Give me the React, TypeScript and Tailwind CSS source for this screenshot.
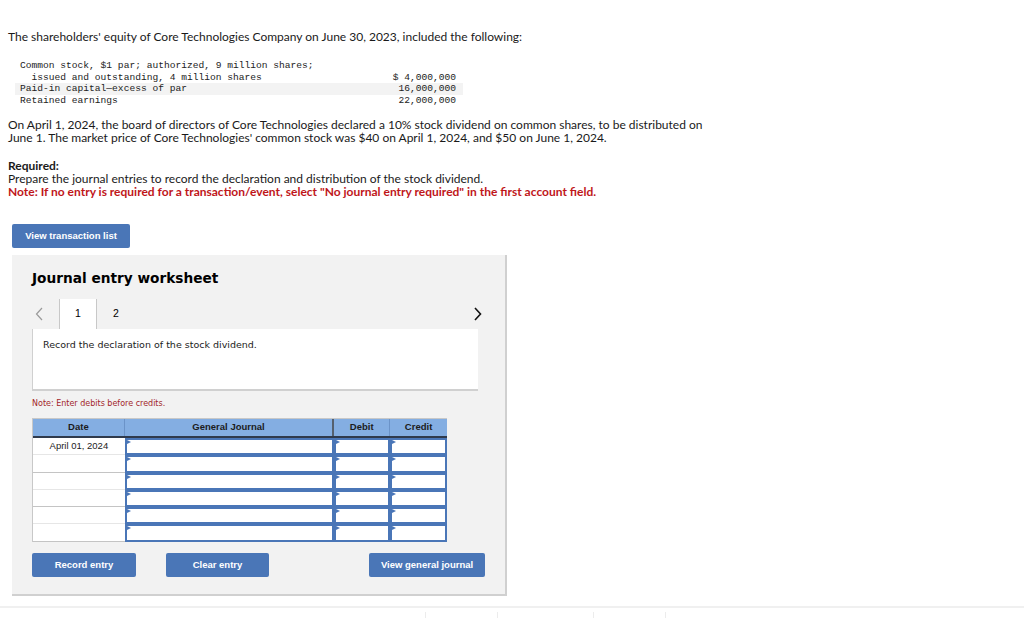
const rows = [0, 1, 2, 3, 4, 5];

const Cell = ({ w }: { w: string }) => (
  <div className={`relative h-[17.3px] ${w} border-2 border-[#4a76b7] bg-white`}>
    <span className="absolute left-0 top-0 h-0 w-0 border-y-[2.5px] border-l-[4px] border-y-transparent border-l-[#4a76b7]" />
  </div>
);

const Btn = ({ label, w }: { label: string; w: string }) => (
  <button
    className={`flex h-[24px] ${w} items-center justify-center rounded-[2px] bg-[#4a76b7] text-[9.5px] font-bold text-white`}
    style={{ fontFamily: '"Liberation Sans", Arial, sans-serif' }}
  >
    {label}
  </button>
);

const App = () => {
  return (
    <div className="relative h-[619px] w-[1024px] overflow-hidden bg-white text-[#1a1a1a]">
      <div className="px-2 pt-[29px]" style={{ fontFamily: "Lato, sans-serif" }}>
        <p className="text-[12px] leading-[15px]">
          The shareholders' equity of Core Technologies Company on June 30, 2023, included the following:
        </p>

        <div
          className="ml-[7px] mt-[16px] w-[448px] text-[9.6px] leading-[11.5px] text-[#222]"
          style={{ fontFamily: '"Liberation Mono", "Courier New", monospace' }}
        >
          <div className="pl-[5px]">Common stock, $1 par; authorized, 9 million shares;</div>
          <div className="flex justify-between pl-[5px] pr-[7px]">
            <span className="whitespace-pre">  issued and outstanding, 4 million shares</span>
            <span>$ 4,000,000</span>
          </div>
          <div className="flex justify-between bg-[#f3f3f3] pl-[5px] pr-[7px]">
            <span>Paid-in capital—excess of par</span>
            <span>16,000,000</span>
          </div>
          <div className="flex justify-between pl-[5px] pr-[7px]">
            <span>Retained earnings</span>
            <span>22,000,000</span>
          </div>
        </div>

        <p className="mt-[12px] text-[12px] leading-[13px]">
          On April 1, 2024, the board of directors of Core Technologies declared a 10% stock dividend on common shares, to be distributed on
          <br />
          June 1. The market price of Core Technologies' common stock was $40 on April 1, 2024, and $50 on June 1, 2024.
        </p>

        <div className="mt-[15px] text-[12px] leading-[13px]">
          <div className="font-bold">Required:</div>
          <div>Prepare the journal entries to record the declaration and distribution of the stock dividend.</div>
          <div className="font-bold text-[#c0161a]">
            Note: If no entry is required for a transaction/event, select "No journal entry required" in the first account field.
          </div>
        </div>
      </div>

      <div className="ml-[12px] mt-[26px] flex">
        <Btn label="View transaction list" w="w-[118px]" />
      </div>

      <div
        className="ml-[12px] mt-[7px] w-[495px] border-b-2 border-r-2 border-[#d0d0d0] bg-[#f2f2f2] px-[20px] pb-[17px] pt-[13px]"
        style={{ fontFamily: '"DejaVu Sans", Verdana, sans-serif' }}
      >
        <h2 className="text-[13.7px] font-bold leading-[20px] text-black">Journal entry worksheet</h2>

        <div className="mt-[11px] flex h-[30px] items-center" style={{ fontFamily: '"Liberation Sans", Arial, sans-serif' }}>
          <div className="w-[27px] pl-[3px]">
            <svg width="8" height="14" viewBox="0 0 8 14" fill="none" stroke="#9a9a9a" strokeWidth="1.2">
              <path d="M7 1 L1.5 7 L7 13" />
            </svg>
          </div>
          <div className="flex h-full w-[38px] items-center justify-center border-x border-[#c8c8c8] bg-white text-[10.5px] text-black">
            1
          </div>
          <div className="flex h-full w-[38px] items-center justify-center text-[10.5px] text-black">2</div>
          <div className="ml-auto pr-[3px]">
            <svg width="8" height="14" viewBox="0 0 8 14" fill="none" stroke="#111" strokeWidth="1.6">
              <path d="M1 1 L6.5 7 L1 13" />
            </svg>
          </div>
        </div>

        <div className="h-[62px] w-[446px] border-b-2 border-l border-[#d0d0d0] bg-white px-[10px] pt-[9px] text-[9.5px] text-[#222]">
          Record the declaration of the stock dividend.
        </div>

        <p className="mt-[7px] text-[8px] leading-[12px] text-[#a2262a]">Note: Enter debits before credits.</p>

        <div
          className="mt-[8px] w-[415px] border-l border-t border-[#c8c8c8] text-[9.5px]"
          style={{ fontFamily: '"Liberation Sans", Arial, sans-serif' }}
        >
          <div className="flex h-[19px] border-b-2 border-[#2f3a4c] bg-[#84aee2] font-bold text-[#1c1c1c]">
            <div className="flex w-[92px] items-center justify-center border-r border-[#6b93c8]">Date</div>
            <div className="flex w-[210px] items-center justify-center border-r-2 border-[#55606e]">General Journal</div>
            <div className="flex w-[56px] items-center justify-center border-r border-[#6b93c8]">Debit</div>
            <div className="flex w-[57px] items-center justify-center">Credit</div>
          </div>
          {rows.map((r) => (
            <div key={r} className="flex">
              <div
                className={`flex h-[17.3px] w-[92px] items-center justify-center border-b bg-white text-[#222] ${
                  r % 2 === 0 ? "border-[#e6e6e6]" : "border-[#c4c4c4]"
                }`}
              >
                {r === 0 ? "April 01, 2024" : ""}
              </div>
              <Cell w="w-[210px]" />
              <Cell w="w-[56px]" />
              <Cell w="w-[57px]" />
            </div>
          ))}
        </div>

        <div className="mt-[11px] flex">
          <Btn label="Record entry" w="w-[104px]" />
          <div className="ml-[30px] flex">
            <Btn label="Clear entry" w="w-[103px]" />
          </div>
          <div className="ml-auto flex">
            <Btn label="View general journal" w="w-[116px]" />
          </div>
        </div>
      </div>

      <div className="mt-[10px] h-[2px] w-full bg-[#f0f0f0]" />
      <div className="flex h-[10px] pt-[4px]">
        <div className="ml-[425px] w-[72px] border-l border-[#ececec]" />
        <div className="w-[96px] border-l border-[#ececec]" />
        <div className="w-[72px] border-l border-[#ececec]" />
        <div className="border-l border-[#ececec]" />
      </div>
    </div>
  );
};

export default App;
